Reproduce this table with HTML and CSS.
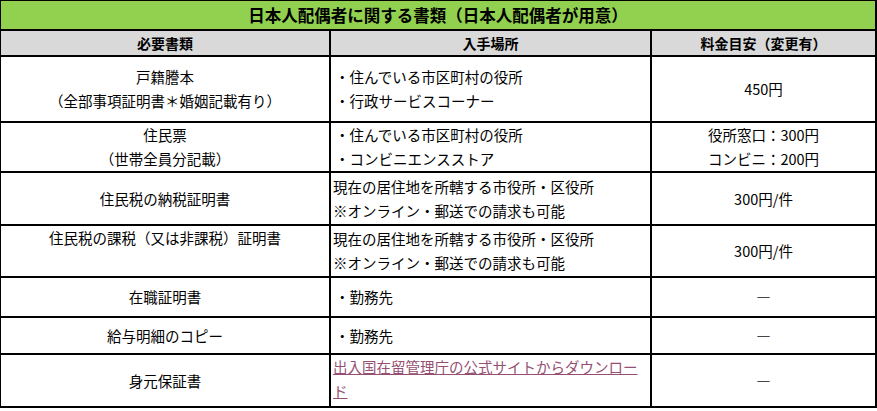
FILE: index.html
```html
<!DOCTYPE html>
<html lang="ja">
<head>
<meta charset="utf-8">
<link rel="stylesheet" href="styles.css">
</head>
<body>
<table class="docs">
  <colgroup>
    <col class="c1">
    <col class="c2">
    <col class="c3">
  </colgroup>
  <tr class="r-title"><th colspan="3" class="title">日本人配偶者に関する書類（日本人配偶者が用意）</th></tr>
  <tr class="r-head">
    <th class="head">必要書類</th>
    <th class="head">入手場所</th>
    <th class="head">料金目安（変更有）</th>
  </tr>
  <tr class="r1">
    <td class="name">戸籍謄本<br>（全部事項証明書＊婚姻記載有り）</td>
    <td class="place">・住んでいる市区町村の役所<br>・行政サービスコーナー</td>
    <td class="fee">450円</td>
  </tr>
  <tr class="r2">
    <td class="name">住民票<br>（世帯全員分記載）</td>
    <td class="place">・住んでいる市区町村の役所<br>・コンビニエンスストア</td>
    <td class="fee">役所窓口：300円<br>コンビニ：200円</td>
  </tr>
  <tr class="r3">
    <td class="name">住民税の納税証明書</td>
    <td class="place flush">現在の居住地を所轄する市役所・区役所<br>※オンライン・郵送での請求も可能</td>
    <td class="fee">300円/件</td>
  </tr>
  <tr class="r4">
    <td class="name top">住民税の課税（又は非課税）証明書</td>
    <td class="place flush">現在の居住地を所轄する市役所・区役所<br>※オンライン・郵送での請求も可能</td>
    <td class="fee">300円/件</td>
  </tr>
  <tr class="r5">
    <td class="name">在職証明書</td>
    <td class="place">・勤務先</td>
    <td class="fee dash">―</td>
  </tr>
  <tr class="r6">
    <td class="name">給与明細のコピー</td>
    <td class="place">・勤務先</td>
    <td class="fee dash">―</td>
  </tr>
  <tr class="r7">
    <td class="name">身元保証書</td>
    <td class="place flush top"><a class="link" href="#">出入国在留管理庁の公式サイトからダウンロード</a></td>
    <td class="fee dash">―</td>
  </tr>
</table>
</body>
</html>
```
FILE: styles.css
```css
html, body {
  margin: 0;
  padding: 0;
  background: #ffffff;
}
body {
  font-family: "Noto Sans CJK JP", "Noto Sans", sans-serif;
  color: #000;
  overflow: hidden;
}
.docs {
  border-collapse: collapse;
  table-layout: fixed;
  width: 878px;
  margin-left: -1px;
  margin-top: -1px;
  font-size: 14.5px;
  line-height: 24px;
}
.c1 { width: 330px; }
.c2 { width: 321px; }
.c3 { width: 225px; }
.docs th, .docs td {
  border: 2px solid #000;
  padding: 0 4px;
  vertical-align: middle;
}
.title {
  background: #92d050;
  font-size: 16.5px;
  font-weight: bold;
  text-align: center;
}
.head {
  background: #d9d9d9;
  font-size: 14px;
  font-weight: bold;
  text-align: center;
}
.name { text-align: center; }
.fee { text-align: center; }
.dash { font-weight: bold; color: #111; }
.place { text-align: left; padding-left: 4px; }
.place.flush { padding-left: 2px; }
.top { vertical-align: top !important; }
.link {
  color: #954f72;
  text-decoration: underline;
}
.r-title { height: 30px; }
.r-head { height: 23px; }
.r1 { height: 66px; }
.r2 { height: 49px; }
.r3 { height: 53px; }
.r4 { height: 52px; }
.r5 { height: 40px; }
.r6 { height: 37px; }
.r7 { height: 53px; }
```
